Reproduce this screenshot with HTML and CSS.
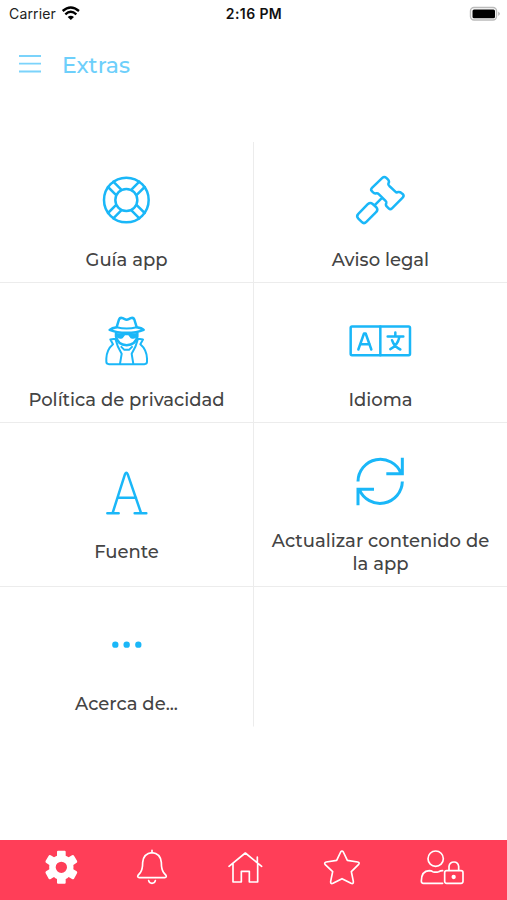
FILE: index.html
```html
<!DOCTYPE html>
<html lang="es">
<head>
<meta charset="utf-8">
<title>Extras</title>
<link rel="stylesheet" href="styles.css">
</head>
<body>
<div class="status">
  <div class="carrier"><span>Carrier</span>
    <svg width="20" height="15" viewBox="0 0 60 45" fill="none" stroke="#000" stroke-width="7"><path d="M5 15Q29-6 54 15M13 25Q29 10 46 25"/><path d="M20 33Q29 25 39 33L29.500 42Z" fill="#000" stroke="none"/></svg>
  </div>
  <div class="clock">2:16 PM</div>
  <svg class="battery" width="32" height="16" viewBox="0 0 32 16"><rect x="1.500" y="1.500" width="26" height="12.500" rx="3.500" fill="#fff" stroke="#bbb" stroke-width="1.400"/><rect x="3.500" y="3.500" width="22.500" height="8.800" rx="1.500"/><path d="M29.300 5.500v4.500q3-2.200 0-4.500" fill="#aaa"/></svg>
</div>
<header class="header">
  <svg width="22" height="20" viewBox="0 0 22 20" stroke="#7bd3fb" stroke-width="1.800"><path d="M0 2h22M0 9.700h22M0 17.500h22"/></svg>
  <h1>Extras</h1>
</header>
<main class="grid">
  <div class="cell">
    <svg class="icon" viewBox="0 0 70 60"><g transform="translate(-22 -10) scale(.33333)"><circle cx="169" cy="120" r="67"/><circle cx="169" cy="120" r="33"/><path d="M114 81l23 23M130 65l23 23M208 65l-23 23M224 81l-23 23M114 159l23-23M130 175l23-23M208 175l-23-23M224 159l-23-23"/></g></svg>
    <span class="label">Guía app</span>
  </div>
  <div class="cell">
    <svg class="icon" viewBox="0 0 70 60"><g transform="translate(-26 -9.700) scale(.33333)"><path d="M187 53Q193 47 199 53L205 59Q209 64 205 70Q204 73 208 77L226 94Q230 98 234 95Q240 94 244 98L249 102Q253 107 248 112L216 144Q211 149 206 144L200 138Q196 134 199 128Q200 125 196 121L177 102Q173 98 169 99Q163 101 159 96L155 92Q151 88 156 83ZM186 113L165 134M144 131Q151 125 158 131L169 141Q175 148 169 155L139 185Q132 192 125 185L115 175Q108 168 115 161Z"/></g></svg>
    <span class="label">Aviso legal</span>
  </div>
  <div class="cell">
    <svg class="icon" viewBox="0 0 70 60"><g transform="translate(-72 -10.500) scale(.33333)"><path d="M290 80Q276 82 269 88Q290 97 320 97Q350 97 371 88Q365 82 350 80L343 57Q340 50 332 53L326 56Q320 59 314 56L308 53Q300 50 297 57ZM288 96V108Q293 133 320 134Q347 133 352 108V96"/><path class="fine" d="M290 80Q320 88 350 80M286 115L271 117L279 131Q260 147 259 174V184Q259 191 267 191H373Q381 191 381 184V174Q380 147 361 131L369 117L354 115M286 115Q291 137 305 160L300 190M354 115Q349 137 335 160L340 190M304 139L313 148H327L336 139"/><path class="solid" d="M289 98H351V108Q344 119 332 113L325 104H315L308 113Q296 119 289 108Z"/></g></svg>
    <span class="label">Política de privacidad</span>
  </div>
  <div class="cell">
    <svg class="icon" viewBox="0 0 70 60"><g transform="translate(-26 -10.500) scale(.33333)"><rect x="92" y="78" width="178" height="86" rx="4"/><path d="M181 78V164M115 147L132 99H137L154 147M121 131H149M203 108H250M226 96V107M238 110Q233 134 211 146M216 119Q222 138 241 147"/></g></svg>
    <span class="label">Idioma</span>
  </div>
  <div class="cell">
    <svg class="icon" viewBox="0 0 70 60"><g transform="translate(-22 -12.500) scale(.33333)"><path d="M112 188H146M194 188H229M128 187L165 71Q169 62 173 71L213 187M143 142H198"/></g></svg>
    <span class="label">Fuente</span>
  </div>
  <div class="cell">
    <svg class="icon" viewBox="0 0 70 60"><g class="butt" transform="translate(-92 -10.500) scale(.33333)" stroke-width="9"><path d="M312 123A67 67 0 0 1 441 98M445 52V100H397M445 123A67 67 0 0 1 316 147M312 194V146H360"/></g></svg>
    <span class="label">Actualizar contenido de<br>la app</span>
  </div>
  <div class="cell">
    <svg class="icon" viewBox="0 0 70 60"><g class="solid" transform="translate(-32 5) scale(.33333)"><circle cx="166" cy="74" r="9.500"/><circle cx="200" cy="74" r="9.500"/><circle cx="235" cy="74" r="9.500"/></g></svg>
    <span class="label">Acerca de...</span>
  </div>
  <div class="cell"></div>
</main>
<nav class="tabs">
  <svg width="32.700" height="35" viewBox="135 60 98 105"><path fill="#fff" fill-rule="evenodd" d="M174 62H194Q197 62 197 65V77Q202 79 206 82L216 76Q220 74 222 77L231 92Q233 96 230 98L220 105Q221 112 220 118L230 124Q233 127 231 130L222 146Q219 149 216 147L206 141Q202 145 197 147V158Q197 161 194 161H174Q171 161 171 158V147Q166 145 162 141L152 147Q149 149 146 146L137 130Q135 127 138 124L148 118Q147 112 148 105L138 98Q135 96 137 92L146 77Q148 74 152 76L162 82Q166 79 171 77V65Q171 62 174 62ZM184 95A17 17 0 1 0 184 129A17 17 0 1 0 184 95Z"/></svg>
  <svg width="31" height="35" viewBox="414 60 93 105"><path d="M456 61V68M456 68Q431 70 428 97Q428 119 421 128L414 136Q411 142 418 143H494Q501 142 498 136L491 128Q484 119 484 97Q481 70 456 68M446 152Q448 160 456 160Q464 160 466 152"/></svg>
  <svg width="34" height="35" viewBox="686 60 102 105"><path d="M686 109L735 69L784 109M698 101V156H723V124H747V156H772V99M771 96V81"/></svg>
  <svg width="37" height="35" viewBox="208 60 111 105"><path d="M261 66Q265 60 269 66L281 91L312 96Q319 98 315 103L293 125L299 154Q300 163 292 160L265 146L238 160Q230 163 231 154L237 125L214 103Q211 98 218 96L249 91Z"/></svg>
  <svg width="44" height="35" viewBox="498 60 132 105"><circle cx="545" cy="86" r="23"/><path d="M566 160H508Q502 160 502 153Q502 123 526 122Q532 122 536 125Q545 128 554 125Q559 122 566 122"/><rect x="572" y="122" width="55" height="38" rx="6"/><path d="M585 121V109Q587 96 600 96Q612 96 614 109V121"/><circle cx="599" cy="141" r="4" fill="#fff"/></svg>
</nav>
</body>
</html>
```
FILE: styles.css
```css
* { box-sizing: border-box; }
body {
  margin: 0;
  height: 900px;
  display: flex;
  flex-direction: column;
  background: #fff;
  overflow: hidden;
  font-family: Montserrat, Inter, "Liberation Sans", sans-serif;
}
svg { display: block; flex: none; }
.status {
  height: 27px;
  padding: 0 6px 0 9px;
  display: grid;
  grid-template-columns: 1fr auto 1fr;
  align-items: center;
  font-family: Inter, sans-serif;
  font-size: 14px;
  color: #222;
}
.carrier { display: flex; align-items: center; gap: 5px; }
.carrier span { letter-spacing: 0.15px; }
.clock { font-weight: 600; color: #111; letter-spacing: 0.4px; margin-right: 2px; }
.battery { justify-self: end; }
.header {
  height: 115px;
  padding: 27px 0 0 19px;
  display: flex;
  align-items: flex-start;
  gap: 21px;
}
.header h1 {
  margin: -2px 0 0;
  font-size: 22px;
  line-height: 27px;
  font-weight: 500;
  color: #6dcffb;
}
.grid {
  display: grid;
  grid-template-columns: 253px 254px;
  grid-template-rows: 141px 140px 164px 140px;
}
.cell {
  display: flex;
  flex-direction: column;
  align-items: center;
  justify-content: center;
  gap: 18.500px;
  padding-top: 17.500px;
  border-bottom: 1px solid #ececec;
}
.cell:nth-child(even) { border-left: 1px solid #ececec; }
.cell:nth-child(n+7) { border-bottom-color: transparent; }
.icon {
  width: 70px;
  height: 60px;
  fill: none;
  stroke: #1ab7f8;
  stroke-width: 7.500;
  stroke-linecap: round;
  stroke-linejoin: round;
}
.butt { stroke-linecap: butt; stroke-linejoin: miter; }
.fine { stroke-width: 6; }
.solid { fill: #1ab7f8; stroke: none; }
.label {
  font-size: 18px;
  line-height: 23px;
  font-weight: 500;
  color: #444;
  text-align: center;
  white-space: nowrap;
}
.tabs {
  margin-top: auto;
  height: 60px;
  padding: 10px 43px 0 45px;
  display: flex;
  justify-content: space-between;
  align-items: flex-start;
  background: #ff3e58;
}
.tabs svg {
  fill: none;
  stroke: #fff;
  stroke-width: 5;
  stroke-linecap: round;
  stroke-linejoin: round;
  overflow: visible;
}
.tabs svg:first-child { stroke: none; }
```
